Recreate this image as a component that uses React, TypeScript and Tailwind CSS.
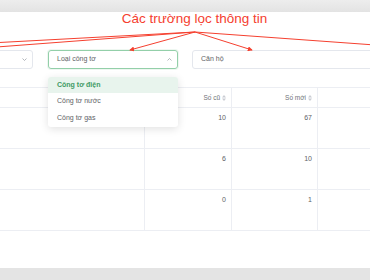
import type { ReactNode } from 'react'

function SortIcon() {
  return (
    <svg width="4" height="6" viewBox="0 0 4 6" className="ml-[2px] shrink-0">
      <path d="M2 0 L4 2.4 L0 2.4 Z" fill="#c9ccd3" />
      <path d="M2 6 L4 3.6 L0 3.6 Z" fill="#c9ccd3" />
    </svg>
  )
}

function Chevron({ up }: { up?: boolean }) {
  return (
    <svg width="5" height="3" viewBox="0 0 5 3" className="shrink-0">
      <path
        d={up ? 'M0.5 2.5 L2.5 0.5 L4.5 2.5' : 'M0.5 0.5 L2.5 2.5 L4.5 0.5'}
        fill="none"
        stroke="#a0a4ab"
        strokeWidth="0.8"
      />
    </svg>
  )
}

function Cell({ children, w, last }: { children?: ReactNode; w: string; last?: boolean }) {
  return (
    <div
      className={`${w} ${last ? 'flex-1' : 'border-r'} flex shrink-0 justify-end border-[#eceef3] pr-[5px]`}
    >
      {children}
    </div>
  )
}

const rows = [
  { oldVal: 10, newVal: 67 },
  { oldVal: 6, newVal: 10 },
  { oldVal: 0, newVal: 1 },
]

export default function App() {
  return (
    <div className="relative h-[280px] w-[370px] overflow-hidden bg-[#e4e4e4] font-['Liberation_Sans',Arial,sans-serif]">
      <div className="h-[12px] bg-gradient-to-b from-[#ededed] to-[#e3e3e3]" />

      <div className="relative h-[256px] bg-white">
        <div className="h-[14px] pl-[19px] text-center text-[13.5px] leading-[14px] text-[#f5402f]">
          Các trường lọc thông tin
        </div>

        {/* filters */}
        <div className="mt-[24px] flex h-[19px] text-[7px] text-[#606266]">
          <div className="ml-[-87px] flex w-[120px] shrink-0 items-center justify-end rounded-[3px] border border-[#e4e7ed] pr-[5px]">
            <Chevron />
          </div>
          <div className="ml-[15px] flex w-[130px] shrink-0 items-center justify-between rounded-[3px] border border-[#93cfa9] pl-[8px] pr-[5px] shadow-[0_0_0_1px_#eef7f1]">
            <span>Loại công tơ</span>
            <Chevron up />
          </div>
          <div className="ml-[14px] flex w-[200px] shrink-0 items-center rounded-[3px] border border-[#e4e7ed] pl-[8px]">
            Căn hộ
          </div>
        </div>

        {/* table */}
        <div className="mt-[18px] text-[7px] text-[#606266]">
          <div className="flex h-[21px] items-stretch border-y border-[#eceef3] text-[6.5px] text-[#707379]">
            <Cell w="w-[145px]" />
            <Cell w="w-[87px]">
              <div className="flex items-center">
                Số cũ
                <SortIcon />
              </div>
            </Cell>
            <Cell w="w-[86px]">
              <div className="flex items-center">
                Số mới
                <SortIcon />
              </div>
            </Cell>
            <Cell w="" last />
          </div>
          {rows.map((r, i) => (
            <div key={i} className="flex h-[41px] border-b border-[#eceef3]">
              <Cell w="w-[145px]" />
              <Cell w="w-[87px]">
                <span className="pt-[6px] leading-[8px] text-[#606266]">{r.oldVal}</span>
              </Cell>
              <Cell w="w-[86px]">
                <span className="pt-[6px] leading-[8px] text-[#606266]">{r.newVal}</span>
              </Cell>
              <Cell w="" last />
            </div>
          ))}
        </div>

        {/* dropdown */}
        <div className="absolute left-[48px] top-[65px] w-[130px] overflow-hidden rounded-[3px] bg-white text-[7px] text-[#606266] shadow-[0_2px_8px_rgba(0,0,0,0.12)]">
          <div className="flex h-[16px] items-center bg-[#e8f4ed] pl-[9px] font-bold text-[#3f9a64]">
            Công tơ điện
          </div>
          <div className="flex h-[17px] items-center pl-[9px]">Công tơ nước</div>
          <div className="flex h-[17px] items-center pl-[9px]">Công tơ gas</div>
        </div>
      </div>

      {/* annotation arrows */}
      <svg
        className="pointer-events-none absolute left-0 top-0"
        width="370"
        height="280"
        viewBox="0 0 370 280"
      >
        <defs>
          <marker id="ah" viewBox="0 0 6 6" refX="5" refY="3" markerWidth="5" markerHeight="5" orient="auto">
            <path d="M0 0 L6 3 L0 6 Z" fill="#f5402f" />
          </marker>
        </defs>
        <g stroke="#f5402f" strokeWidth="1" fill="none">
          <line x1="195" y1="32" x2="-10" y2="43" />
          <line x1="195" y1="32" x2="-10" y2="47.5" />
          <line x1="195" y1="32" x2="130" y2="50" markerEnd="url(#ah)" />
          <line x1="195" y1="32" x2="252" y2="50" markerEnd="url(#ah)" />
          <line x1="195" y1="32" x2="375" y2="45" />
        </g>
      </svg>
    </div>
  )
}
